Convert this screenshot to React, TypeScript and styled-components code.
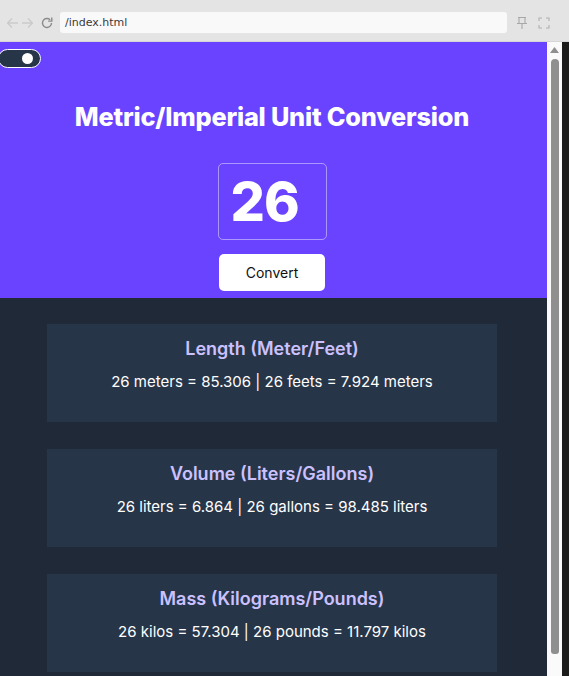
import React from "react";
import styled, { createGlobalStyle } from "styled-components";

const Global = createGlobalStyle`
  html, body { margin: 0; padding: 0; }
  body {
    width: 569px;
    height: 676px;
    overflow: hidden;
    font-family: Inter, "Noto Sans", sans-serif;
    background: #1f2937;
  }
  * { box-sizing: border-box; }
`;

const Frame = styled.div`
  width: 569px;
  height: 676px;
  display: flex;
  flex-direction: column;
`;

const Chrome = styled.div`
  height: 42px;
  flex: none;
  background: #e4e4e4;
  border-bottom: 1px solid #d6d6d6;
  display: flex;
  align-items: flex-start;
  padding: 12px 19px 0 6px;
`;

const NavGroup = styled.div`
  display: flex;
  align-items: center;
  gap: 2px;
  width: 54px;
  height: 21px;
`;

const Address = styled.div`
  flex: 1;
  height: 21px;
  background: #f9f9f9;
  border-radius: 3px;
  font-family: "DejaVu Sans", sans-serif;
  font-size: 11px;
  color: #3a3a3a;
  display: flex;
  align-items: center;
  padding-left: 5px;
`;

const RightIcons = styled.div`
  display: flex;
  align-items: center;
  gap: 10px;
  margin-left: 9px;
  height: 21px;
`;

const Viewport = styled.div`
  flex: 1;
  display: flex;
  min-height: 0;
`;

const Page = styled.div`
  flex: 1;
  display: flex;
  flex-direction: column;
  background: #1f2937;
  position: relative;
`;

const Scrollbar = styled.div`
  width: 15px;
  flex: none;
  background: #fafafa;
  display: flex;
  flex-direction: column;
  align-items: center;
  padding-top: 5px;
`;

const Thumb = styled.div`
  width: 8px;
  height: 595px;
  margin-top: 6px;
  background: #8f8f8f;
  border-radius: 4px 4px 3px 3px;
`;

const Edge = styled.div`
  width: 7px;
  flex: none;
  background: #1c1d1a;
`;

const Header = styled.header`
  background: #6943ff;
  height: 256px;
  display: flex;
  flex-direction: column;
  align-items: center;
  padding: 60px 3px 0 0;
`;

const Toggle = styled.div`
  position: absolute;
  top: 7px;
  left: -2px;
  width: 43px;
  height: 19px;
  border-radius: 10px;
  background: #273549;
  border: 1.5px solid #ffffff;
`;

const Knob = styled.div`
  position: absolute;
  top: 3px;
  right: 7px;
  width: 11px;
  height: 11px;
  border-radius: 50%;
  background: #ffffff;
`;

const Title = styled.h1`
  margin: 0;
  font-size: 25.3px;
  font-weight: 800;
  color: #ffffff;
  letter-spacing: -0.2px;
  line-height: 30px;
`;

const NumberBox = styled.div`
  margin-top: 31px;
  width: 109px;
  height: 77px;
  border: 1px solid rgba(255, 255, 255, 0.45);
  border-radius: 5px;
  display: flex;
  align-items: center;
  justify-content: flex-start;
  padding-left: 12px;
  font-size: 54px;
  font-weight: 800;
  color: #ffffff;
  letter-spacing: -1px;
`;

const ConvertButton = styled.button`
  margin-top: 14px;
  width: 106px;
  height: 37px;
  border: none;
  border-radius: 5px;
  background: #ffffff;
  color: #111111;
  font-family: Inter, "Noto Sans", sans-serif;
  font-size: 14px;
  font-weight: 400;
`;

const Results = styled.main`
  display: flex;
  flex-direction: column;
  align-items: center;
  gap: 27px;
  padding: 26px 3px 0 0;
`;

const Card = styled.section`
  width: 450px;
  height: 98px;
  background: #273549;
  display: flex;
  flex-direction: column;
  align-items: center;
  padding-top: 14px;
`;

const CardTitle = styled.h2`
  margin: 0;
  font-size: 18px;
  font-weight: 600;
  color: #ccc1ff;
  line-height: 22px;
`;

const CardText = styled.p`
  margin: 11px 0 0;
  font-size: 15px;
  font-weight: 400;
  color: #ffffff;
  line-height: 22px;
`;

const Icon = styled.svg`
  display: block;
`;

const conversions = [
  { title: "Length (Meter/Feet)", text: "26 meters = 85.306 | 26 feets = 7.924 meters" },
  { title: "Volume (Liters/Gallons)", text: "26 liters = 6.864 | 26 gallons = 98.485 liters" },
  { title: "Mass (Kilograms/Pounds)", text: "26 kilos = 57.304 | 26 pounds = 11.797 kilos" },
];

export default function App() {
  return (
    <>
      <Global />
      <Frame>
        <Chrome>
          <NavGroup>
            <Icon width="13" height="12" viewBox="0 0 13 12">
              <path d="M12 6H1.5M6 1.5L1.5 6L6 10.5" stroke="#cacaca" strokeWidth="1.3" fill="none" />
            </Icon>
            <Icon width="13" height="12" viewBox="0 0 13 12">
              <path d="M1 6h10.5M7 1.5L11.5 6L7 10.5" stroke="#cacaca" strokeWidth="1.3" fill="none" />
            </Icon>
            <Icon width="14" height="14" viewBox="0 0 14 14" style={{ marginLeft: 4 }}>
              <path d="M11.5 7a4.5 4.5 0 1 1-1.4-3.3" stroke="#8a8a8a" strokeWidth="1.4" fill="none" />
              <path d="M11.8 1.5v3.6H8.2" stroke="#8a8a8a" strokeWidth="1.4" fill="none" />
            </Icon>
          </NavGroup>
          <Address>/index.html</Address>
          <RightIcons>
            <Icon width="12" height="14" viewBox="0 0 12 14">
              <path d="M2 1.5h8M3 1.5v6M9 1.5v6M1 7.5h10M6 7.5v5.5" stroke="#a8a8a8" strokeWidth="1.1" fill="none" />
            </Icon>
            <Icon width="12" height="12" viewBox="0 0 12 12">
              <path d="M1 4V1h3M8 1h3v3M11 8v3H8M4 11H1V8" stroke="#b0b0b0" strokeWidth="1.1" fill="none" />
            </Icon>
          </RightIcons>
        </Chrome>
        <Viewport>
          <Page>
            <Toggle>
              <Knob />
            </Toggle>
            <Header>
              <Title>Metric/Imperial Unit Conversion</Title>
              <NumberBox>26</NumberBox>
              <ConvertButton>Convert</ConvertButton>
            </Header>
            <Results>
              {conversions.map((c) => (
                <Card key={c.title}>
                  <CardTitle>{c.title}</CardTitle>
                  <CardText>{c.text}</CardText>
                </Card>
              ))}
            </Results>
          </Page>
          <Scrollbar>
            <Icon width="9" height="6" viewBox="0 0 9 6">
              <path d="M0 6L4.5 0L9 6Z" fill="#8f8f8f" />
            </Icon>
            <Thumb />
          </Scrollbar>
          <Edge />
        </Viewport>
      </Frame>
    </>
  );
}
